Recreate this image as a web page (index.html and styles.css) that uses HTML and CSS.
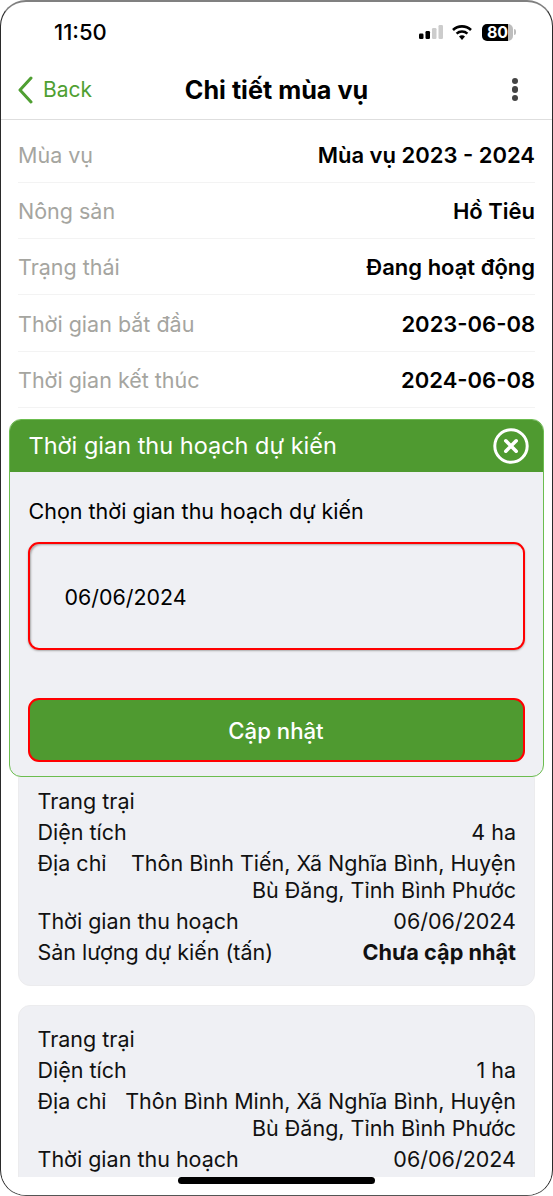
FILE: index.html
```html
<!DOCTYPE html>
<html lang="vi">
<head>
<meta charset="utf-8">
<title>Chi tiết mùa vụ</title>
<link rel="stylesheet" href="styles.css">
</head>
<body>
<div class="screen">
  <div class="status">
    <span class="time">11:50</span>
    <div class="status-icons">
      <svg class="signal" width="24" height="14" viewBox="0 0 24 14">
        <rect x="0" y="8.5" width="4.5" height="5.5" rx="1.2" fill="#000"/>
        <rect x="6.5" y="6" width="4.5" height="8" rx="1.2" fill="#000"/>
        <rect x="13" y="3" width="4.5" height="11" rx="1.2" fill="#ccc"/>
        <rect x="19.5" y="0" width="4.5" height="14" rx="1.2" fill="#ccc"/>
      </svg>
      <svg class="wifi" width="20" height="15" viewBox="0 0 20 15">
        <path d="M1 5 A13 13 0 0 1 19 5" fill="none" stroke="#000" stroke-width="2.6"/>
        <path d="M4.6 8.6 A8 8 0 0 1 15.4 8.6" fill="none" stroke="#000" stroke-width="2.6"/>
        <path d="M7 11.6 A4 4 0 0 1 13 11.6 L10 15 Z" fill="#000"/>
      </svg>
      <div class="battery"><span class="battery-text">80</span></div>
      <span class="battery-cap"></span>
    </div>
  </div>
  <header class="navbar">
    <div class="back">
      <svg width="16" height="28" viewBox="0 0 16 28"><path d="M14 2 L3 14 L14 26" fill="none" stroke="#4f9f32" stroke-width="3" stroke-linecap="round" stroke-linejoin="round"/></svg>
      <span>Back</span>
    </div>
    <h1 class="nav-title">Chi tiết mùa vụ</h1>
    <div class="more"><i></i><i></i><i></i></div>
  </header>
  <section class="details">
    <div class="row"><span class="label">Mùa vụ</span><span class="value">Mùa vụ 2023 - 2024</span></div>
    <div class="row"><span class="label">Nông sản</span><span class="value">Hồ Tiêu</span></div>
    <div class="row"><span class="label">Trạng thái</span><span class="value">Đang hoạt động</span></div>
    <div class="row"><span class="label">Thời gian bắt đầu</span><span class="value">2023-06-08</span></div>
    <div class="row"><span class="label">Thời gian kết thúc</span><span class="value">2024-06-08</span></div>
  </section>
  <section class="cards">
    <article class="card">
      <div class="line"><span>Trang trại</span></div>
      <div class="line"><span>Diện tích</span><span>4 ha</span></div>
      <div class="line"><span>Địa chỉ</span><span class="addr">Thôn Bình Tiến, Xã Nghĩa Bình, Huyện Bù Đăng, Tỉnh Bình Phước</span></div>
      <div class="line"><span>Thời gian thu hoạch</span><span>06/06/2024</span></div>
      <div class="line"><span>Sản lượng dự kiến (tấn)</span><strong>Chưa cập nhật</strong></div>
    </article>
    <article class="card">
      <div class="line"><span>Trang trại</span></div>
      <div class="line"><span>Diện tích</span><span>1 ha</span></div>
      <div class="line"><span>Địa chỉ</span><span class="addr">Thôn Bình Minh, Xã Nghĩa Bình, Huyện Bù Đăng, Tỉnh Bình Phước</span></div>
      <div class="line"><span>Thời gian thu hoạch</span><span>06/06/2024</span></div>
    </article>
  </section>
  <div class="modal">
    <div class="modal-head">
      <span class="modal-title">Thời gian thu hoạch dự kiến</span>
      <svg width="36" height="36" viewBox="0 0 36 36">
        <circle cx="18" cy="18" r="16.2" fill="none" stroke="#fff" stroke-width="3"/>
        <path d="M12.8 12.8 L23.2 23.2 M23.2 12.8 L12.8 23.2" stroke="#fff" stroke-width="3.6" stroke-linecap="round"/>
      </svg>
    </div>
    <div class="modal-body">
      <p class="modal-label">Chọn thời gian thu hoạch dự kiến</p>
      <div class="input">06/06/2024</div>
      <div class="submit">Cập nhật</div>
    </div>
  </div>
  <div class="home-bar"></div>
</div>
</body>
</html>
```

FILE: styles.css
```css
* { box-sizing: border-box; }
html, body { margin: 0; padding: 0; background: #fff; }
body {
  width: 553px;
  height: 1196px;
  overflow: hidden;
  font-family: Inter, "Noto Sans", sans-serif;
  color: #000;
}
.screen {
  position: relative;
  width: 553px;
  height: 1196px;
  overflow: hidden;
  background: #fff;
  border: 1.5px solid #2a2a2a;
  border-top: 2px solid #808080;
  border-bottom-color: #555;
  border-radius: 26px;
}
.status {
  display: flex;
  justify-content: space-between;
  align-items: center;
  height: 58.5px;
  padding: 2px 36px 0 53px;
}
.time { font-size: 22px; font-weight: 500; }
.status-icons { display: flex; align-items: center; }
.signal { margin-right: 9px; }
.wifi { margin-right: 10px; }
.battery {
  width: 31px;
  height: 17px;
  border-radius: 5px;
  background: linear-gradient(90deg, #000 0 85%, #bdbdbd 85%);
  display: flex;
  align-items: center;
  justify-content: center;
}
.battery-text { color: #fff; font-size: 16px; font-weight: 700; line-height: 1; }
.battery-cap { width: 2px; height: 6px; margin-left: 1px; background: #bdbdbd; border-radius: 0 2px 2px 0; }
.navbar {
  display: grid;
  grid-template-columns: 1fr auto 1fr;
  align-items: center;
  height: 59px;
  padding: 0 16px;
  border-bottom: 1px solid #dedede;
}
.back {
  display: flex;
  align-items: center;
  gap: 10px;
  color: #4f9f32;
  font-size: 21px;
}
.nav-title { margin: 0; font-size: 25.2px; font-weight: 700; }
.more { display: flex; flex-direction: column; align-items: flex-end; gap: 2.2px; padding-right: 18px; }
.more i { display: block; width: 6.5px; height: 6.5px; border-radius: 50%; background: #444; }
.details { padding: 7px 17px 0 17px; }
.row {
  display: flex;
  justify-content: space-between;
  align-items: center;
  height: 56.3px;
  padding-top: 1px;
  border-bottom: 1px solid #f3f3f3;
  font-size: 21.5px;
}
.label { color: #a5a5a0; }
.value { font-weight: 600; font-size: 22px; }
.cards { padding: 359px 17px 0 17px; display: flex; flex-direction: column; gap: 19px; }
.card {
  background: #eff0f4;
  border: 1px solid #ececee;
  border-radius: 12px;
  padding: 20px 18px 19px 18.5px;
  font-size: 21.5px;
  color: #111;
}
.line { display: flex; justify-content: space-between; align-items: flex-start; gap: 16px; line-height: 27.5px; margin-bottom: 3.3px; }
.line:last-child { margin-bottom: 0; }
.line strong { font-weight: 700; font-size: 21.7px; }
.addr { text-align: right; flex: 1; }
.modal {
  position: absolute;
  left: 7.5px;
  top: 417px;
  width: 535px;
  height: 358px;
  border: 1px solid #6cbd4f;
  border-radius: 12px;
  overflow: hidden;
  background: #eff0f4;
}
.modal-head {
  display: flex;
  justify-content: space-between;
  align-items: center;
  height: 52px;
  padding: 0 14px 0 19px;
  background: #4f9a30;
  color: #fff;
  font-size: 23.5px;
}
.modal-title { padding-bottom: 1px; }
.modal-body { padding: 26px 18px 0 18px; }
.modal-label { margin: 0 0 18px; font-size: 21.5px; line-height: 26px; padding-left: 1px; }
.input {
  display: flex;
  align-items: center;
  height: 108px;
  padding: 1px 0 0 35px;
  border: 2px solid #f00;
  border-radius: 11px;
  box-shadow: inset 2px 2px 2px -1px #a9a9a9, 0 1px 2px #aaa;
  font-size: 21.4px;
}
.submit {
  display: flex;
  align-items: center;
  justify-content: center;
  height: 64px;
  margin-top: 48px;
  padding-top: 1px;
  border: 2px solid #f00;
  border-radius: 11px;
  background: #4f9a30;
  color: #fff;
  font-size: 22.2px;
  font-weight: 500;
}
.home-bar {
  position: absolute;
  left: 0;
  right: 0;
  bottom: 0;
  height: 18px;
  background: #fff;
}
.home-bar::after {
  content: "";
  position: absolute;
  left: 177px;
  top: 0;
  width: 197px;
  height: 7px;
  border-radius: 4px;
  background: #000;
}
```
